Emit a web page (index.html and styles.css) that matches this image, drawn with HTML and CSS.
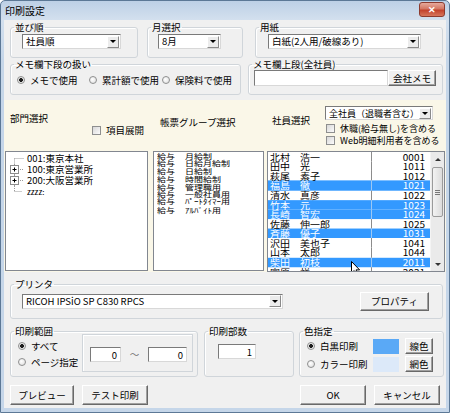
FILE: index.html
```html
<!DOCTYPE html>
<html>
<head>
    <title>印刷設定</title>
    <meta charset="utf-8">
    <link rel="stylesheet" href="styles.css">
</head>
<body>
<div class="window">
    <div class="titlebar">
        <span class="title">印刷設定</span>
        <span class="close">&#x2715;</span>
    </div>
    <div class="client">
        <div class="row row-top">
            <fieldset class="g-sort">
                <legend>並び順</legend>
                <div class="combo w-sort"><span>社員順</span><i class="drop"></i></div>
            </fieldset>
            <fieldset class="g-month">
                <legend>月選択</legend>
                <div class="combo w-month"><span>8月</span><i class="drop"></i></div>
            </fieldset>
            <fieldset class="g-paper">
                <legend>用紙</legend>
                <div class="combo w-paper"><span>白紙(2人用/破線あり)</span><i class="drop"></i></div>
            </fieldset>
        </div>

        <div class="row row-memo">
            <fieldset class="g-memo-lo">
                <legend>メモ欄下段の扱い</legend>
                <div class="radios">
                    <label class="radio w-r1"><i class="rb on"></i>メモで使用</label>
                    <label class="radio w-r2"><i class="rb"></i>累計額で使用</label>
                    <label class="radio"><i class="rb"></i>保険料で使用</label>
                </div>
            </fieldset>
            <fieldset class="g-memo-up">
                <legend>メモ欄上段(全社員)</legend>
                <div class="memo-line">
                    <div class="edit w-memo"></div>
                    <div class="btn w-kaisha">会社メモ</div>
                </div>
            </fieldset>
        </div>

        <div class="panels">
            <div class="panel p-dept">
                <div class="phead">
                    <div class="ptitle">部門選択</div>
                    <label class="chk expand"><i class="cb"></i>項目展開</label>
                </div>
                <div class="plist tree">
                    <div class="node">
                        <svg width="19" height="11"><path d="M8.5 5.5V11M8.5 5.5H18" stroke="#9a9a9a" stroke-dasharray="1 1"/></svg>
                        <span>001:東京本社</span>
                    </div>
                    <div class="node">
                        <svg width="19" height="11"><path d="M8.5 0V11M12 5.5H18" stroke="#9a9a9a" stroke-dasharray="1 1"/><rect x="4.5" y="1.5" width="8" height="8" fill="#fff" stroke="#8c8c8c"/><path d="M6.5 5.5H10.5M8.5 3.5V7.5" stroke="#000"/></svg>
                        <span>100:東京営業所</span>
                    </div>
                    <div class="node">
                        <svg width="19" height="11"><path d="M8.5 0V11M12 5.5H18" stroke="#9a9a9a" stroke-dasharray="1 1"/><rect x="4.5" y="1.5" width="8" height="8" fill="#fff" stroke="#8c8c8c"/><path d="M6.5 5.5H10.5M8.5 3.5V7.5" stroke="#000"/></svg>
                        <span>200:大阪営業所</span>
                    </div>
                    <div class="node">
                        <svg width="19" height="11"><path d="M8.5 0V5.5M8.5 5.5H16" stroke="#9a9a9a" stroke-dasharray="1 1"/></svg>
                        <span class="zz">zzzz:</span>
                    </div>
                </div>
            </div>

            <div class="panel p-group">
                <div class="phead">
                    <div class="ptitle">帳票グループ選択</div>
                </div>
                <div class="plist groups">
                    <div class="squash">
                        <div class="grp"><span>給与</span>月給制</div>
                        <div class="grp"><span>給与</span>日給月給制</div>
                        <div class="grp"><span>給与</span>日給制</div>
                        <div class="grp"><span>給与</span>時間給制</div>
                        <div class="grp"><span>給与</span>管理職用</div>
                        <div class="grp"><span>給与</span>一般社員用</div>
                        <div class="grp"><span>給与</span>ﾊﾟｰﾄﾀｲﾏｰ用</div>
                        <div class="grp"><span>給与</span>ｱﾙﾊﾞｲﾄ用</div>
                    </div>
                </div>
            </div>

            <div class="panel p-emp">
                <div class="phead">
                    <div class="ptitle">社員選択</div>
                    <div class="emp-opts">
                        <div class="combo w-emp"><span>全社員（退職者含む）</span><i class="drop"></i></div>
                        <label class="chk"><i class="cb"></i>休職(給与無し)を含める</label>
                        <label class="chk"><i class="cb"></i>Web明細利用者を含める</label>
                    </div>
                </div>
                <div class="plist emps">
                    <div class="rows">
                        <div class="emp"><span class="sei">北村</span><span class="mei">浩一</span><span class="no">0001</span></div>
                        <div class="emp"><span class="sei">田中</span><span class="mei">光</span><span class="no">1011</span></div>
                        <div class="emp"><span class="sei">萩尾</span><span class="mei">素子</span><span class="no">1012</span></div>
                        <div class="emp sel"><span class="sei">福島</span><span class="mei">徹</span><span class="no">1021</span></div>
                        <div class="emp"><span class="sei">清水</span><span class="mei">真彦</span><span class="no">1022</span></div>
                        <div class="emp sel"><span class="sei">竹本</span><span class="mei">元</span><span class="no">1023</span></div>
                        <div class="emp sel"><span class="sei">長崎</span><span class="mei">智宏</span><span class="no">1024</span></div>
                        <div class="emp"><span class="sei">佐藤</span><span class="mei">伸一郎</span><span class="no">1025</span></div>
                        <div class="emp sel"><span class="sei">斉藤</span><span class="mei">優子</span><span class="no">1031</span></div>
                        <div class="emp"><span class="sei">沢田</span><span class="mei">美也子</span><span class="no">1041</span></div>
                        <div class="emp"><span class="sei">山本</span><span class="mei">太郎</span><span class="no">1044</span></div>
                        <div class="emp sel"><span class="sei">柴田</span><span class="mei">初枝</span><span class="no">2011</span></div>
                        <div class="emp"><span class="sei">宮原</span><span class="mei">祥</span><span class="no">2021</span></div>
                    </div>
                    <div class="vscroll">
                        <div class="sb-btn"><i class="up"></i></div>
                        <div class="sb-track">
                            <div class="thumb"><i></i><i></i><i></i></div>
                        </div>
                        <div class="sb-btn"><i class="down"></i></div>
                    </div>
                    <svg class="cursor" width="10" height="15" viewBox="0 0 10 15"><path d="M0.5 0.5V12L3.2 9.6L5.2 14L7 13.2L5 8.9H8.6Z" fill="#fff" stroke="#000"/></svg>
                </div>
            </div>
        </div>

        <fieldset class="g-printer">
            <legend>プリンタ</legend>
            <div class="printer-line">
                <div class="combo w-printer"><span>RICOH IPSiO SP C830 RPCS</span><i class="drop"></i></div>
                <div class="btn w-prop">プロパティ</div>
            </div>
        </fieldset>

        <div class="row row-opts">
            <fieldset class="g-range">
                <legend>印刷範囲</legend>
                <div class="range-line">
                    <div class="rcol">
                        <label class="radio"><i class="rb on"></i>すべて</label>
                        <label class="radio"><i class="rb"></i>ページ指定</label>
                    </div>
                    <div class="range-box">
                        <div class="edit w-from">0</div>
                        <span class="tilde">～</span>
                        <div class="edit w-to">0</div>
                    </div>
                </div>
            </fieldset>
            <fieldset class="g-copies">
                <legend>印刷部数</legend>
                <div class="edit w-copies">1</div>
            </fieldset>
            <fieldset class="g-color">
                <legend>色指定</legend>
                <div class="crow">
                    <label class="radio w-cr"><i class="rb on"></i>白黒印刷</label>
                    <i class="swatch line-c"></i>
                    <div class="btn w-col">線色</div>
                </div>
                <div class="crow">
                    <label class="radio w-cr"><i class="rb"></i>カラー印刷</label>
                    <i class="swatch net-c"></i>
                    <div class="btn w-col">網色</div>
                </div>
            </fieldset>
        </div>

        <div class="footer">
            <div class="btn w-foot">プレビュー</div>
            <div class="btn w-foot2">テスト印刷</div>
            <div class="spacer"></div>
            <div class="btn w-foot2">OK</div>
            <div class="btn w-foot2 last">キャンセル</div>
        </div>
    </div>
</div>
</body>
</html>
```

FILE: styles.css
```css
* {
    box-sizing: border-box;
}

body {
    margin: 0;
    font-family: "Noto Sans CJK JP", "Liberation Sans", sans-serif;
    font-size: 9.5px;
    color: #000;
    background: #fff;
}

/* ---- window frame ---- */
.window {
    width: 450px;
    height: 413px;
    display: flex;
    flex-direction: column;
    padding: 0 3px 4px;
    border: 1px solid #5c7896;
    border-radius: 5px 5px 0 0;
    background: linear-gradient(#bdd0e6, #d3e0ee 19px, #c5d6e9 60px, #c5d6e9);
}

.titlebar {
    height: 19px;
    display: flex;
    justify-content: space-between;
    align-items: flex-start;
}

.title {
    padding-left: 1px;
    line-height: 20px;
    font-size: 10px;
}

.close {
    width: 26px;
    height: 15px;
    margin: 1px 1px 0 0;
    border: 1px solid #8d3b2f;
    border-radius: 3px;
    background: linear-gradient(#e6a99c, #d47763 45%, #c2422d 55%, #d7765c);
    color: #fff;
    font-size: 9px;
    font-weight: bold;
    line-height: 13px;
    text-align: center;
}

.client {
    flex: 1;
    background: #f0f0f0;
}

/* ---- common controls ---- */
.row {
    display: flex;
}

fieldset {
    margin: 0;
    padding: 1px 0 8px 3px;
    min-width: 0;
    border: 1px solid #d0d5da;
    border-radius: 3px;
    box-shadow: inset 1px 1px 0 #fff;
}

legend {
    padding: 0 1px;
    line-height: 12px;
}

.combo {
    display: flex;
    align-items: center;
    height: 15px;
    padding-left: 3px;
    background: #fff;
    border: 1px solid;
    border-color: #7a7a7a #d8d8d8 #d8d8d8 #7a7a7a;
}

.combo span {
    flex: 1;
    white-space: nowrap;
    overflow: hidden;
    line-height: 13px;
}

.drop {
    width: 12px;
    height: 12px;
    margin-right: 1px;
    display: flex;
    align-items: center;
    justify-content: center;
    background: #ececec;
    border: 1px solid;
    border-color: #fff #8a8a8a #8a8a8a #fff;
}

.drop::after {
    content: "";
    border-left: 3px solid transparent;
    border-right: 3px solid transparent;
    border-top: 3px solid #000;
}

.edit {
    height: 16px;
    padding-right: 3px;
    background: #fff;
    border: 1px solid;
    border-color: #7a7a7a #d8d8d8 #d8d8d8 #7a7a7a;
    text-align: right;
    line-height: 14px;
}

.btn {
    display: flex;
    align-items: center;
    justify-content: center;
    background: #f0f0f0;
    border: 1px solid;
    border-color: #fff #696969 #696969 #fff;
    box-shadow: inset -1px -1px 0 #a0a0a0;
    white-space: nowrap;
}

.radio, .chk {
    display: flex;
    align-items: center;
    white-space: nowrap;
}

.rb {
    width: 8px;
    height: 8px;
    margin-right: 5px;
    border: 1px solid #8e8f8f;
    border-radius: 50%;
    background: radial-gradient(circle at 40% 40%, #fff, #dadada);
}

.rb.on {
    background: radial-gradient(circle, #1e1e1e 0 1.6px, #e6e6e6 2.2px, #fff);
}

.cb {
    width: 9px;
    height: 9px;
    margin-right: 5px;
    border: 1px solid #8e8f8f;
    background: linear-gradient(135deg, #d8d8d8, #fbfbfb);
}

/* ---- top rows ---- */
.row-top {
    margin-top: 1px;
    padding-left: 6px;
}

.g-sort { width: 128px; }
.g-month { width: 96px; margin-left: 9px; }
.g-paper { width: 188px; margin-left: 12px; }

.w-sort { width: 99px; margin-left: 8px; }
.w-month { width: 63px; margin-left: 7px; }
.w-paper { width: 153px; margin-left: 9px; }

.row-memo {
    padding-left: 6px;
}

.g-memo-lo { width: 231px; }
.g-memo-up { width: 195px; margin-left: 7px; }

.radios {
    display: flex;
    margin: 3px 0 0 3px;
    line-height: 12px;
}

.w-r1 { width: 72px; }
.w-r2 { width: 73px; }

.memo-line {
    display: flex;
    margin: -1px 0 0 2px;
}

.w-memo { width: 134px; }
.w-kaisha { width: 48px; height: 16px; }

/* ---- selection panels ---- */
.panels {
    display: flex;
    height: 172px;
    margin-top: 5px;
}

.panel {
    display: flex;
    flex-direction: column;
    background: #faf7e8;
}

.p-dept { width: 146px; }
.p-group { width: 116px; }
.p-emp { width: 180px; }

.phead {
    height: 50px;
}

.plist {
    flex: 1;
    margin-top: 1px;
    background: #fff;
    border: 1px solid #828790;
    overflow: hidden;
}

.p-dept .phead {
    padding: 12px 0 0 6px;
}

.ptitle {
    line-height: 12px;
}

.expand {
    margin: 0 0 0 82px;
    line-height: 12px;
}

.p-dept .plist {
    margin: 1px 2px 1px 1px;
}

.tree {
    padding-top: 1px;
}

.node {
    display: flex;
    align-items: center;
    height: 11px;
    line-height: 11px;
}

.node svg {
    margin-right: 2px;
}

.zz {
    font-size: 8px;
}

.p-group .phead {
    padding: 16px 0 0 10px;
}

.p-group .plist {
    margin: 1px 2px 1px 3px;
}

/* the old list control draws its glyphs squeezed vertically */
.squash {
    padding-left: 3px;
    font-size: 9px;
    transform: scaleY(0.82);
    transform-origin: top left;
}

.grp {
    height: 9.4px;
    line-height: 9.4px;
    white-space: nowrap;
}

.grp span {
    display: inline-block;
    width: 28px;
}

.p-emp .phead {
    display: flex;
    padding: 6px 0 0 6px;
}

.p-emp .ptitle {
    width: 53px;
    margin-top: 8px;
}

.emp-opts .chk {
    height: 12px;
    margin-left: 1px;
    font-size: 9px;
}

.w-emp {
    width: 108px;
    height: 14px;
    margin-bottom: 2px;
    font-size: 9px;
}

.w-emp .drop {
    height: 11px;
}

.emps {
    display: flex;
    position: relative;
    margin: 1px 1px 0 1px;
}

.rows {
    flex: 1;
    font-size: 10px;
    transform: scaleY(0.86);
    transform-origin: top left;
}

.emp {
    display: flex;
    height: 11.15px;
    line-height: 11.15px;
    white-space: nowrap;
}

.emp.sel {
    background: #3399ff;
    color: #fff;
}

.sei {
    width: 32px;
    padding-left: 2px;
}

.mei {
    width: 71px;
}

.no {
    flex: 1;
    padding-right: 5px;
    text-align: right;
    border-left: 1px solid #8c8c8c;
}

.emp.sel .no {
    border-left-color: #9cc8f4;
}

.vscroll {
    width: 14px;
    display: flex;
    flex-direction: column;
    background: #eaeaea;
    border-left: 1px solid #f4f4f4;
}

.sb-btn {
    height: 14px;
    display: flex;
    align-items: center;
    justify-content: center;
}

.up {
    border-left: 3px solid transparent;
    border-right: 3px solid transparent;
    border-bottom: 3px solid #333;
}

.down {
    border-left: 3px solid transparent;
    border-right: 3px solid transparent;
    border-top: 3px solid #333;
}

.sb-track {
    flex: 1;
}

.thumb {
    height: 50px;
    margin: 1px 1px 0;
    display: flex;
    flex-direction: column;
    align-items: center;
    justify-content: center;
    gap: 1px;
    border: 1px solid #9b9b9b;
    border-radius: 2px;
    background: linear-gradient(90deg, #f3f3f3, #dcdcdc);
}

.thumb i {
    width: 5px;
    height: 1px;
    background: #777;
}

.cursor {
    position: absolute;
    left: 83px;
    top: 109px;
}

/* ---- printer ---- */
.g-printer {
    width: 433px;
    margin: 6px 0 0 6px;
    padding-bottom: 7px;
}

.printer-line {
    display: flex;
    align-items: center;
    height: 20px;
}

.w-printer { width: 261px; margin-left: 8px; }
.w-prop { width: 69px; height: 19px; margin-left: 77px; }

/* ---- print options ---- */
.row-opts {
    margin-top: 6px;
    padding-left: 6px;
}

.row-opts fieldset {
    padding-bottom: 3px;
}

.g-range { width: 188px; }
.g-copies { width: 90px; margin-left: 6px; }
.g-color { width: 145px; margin-left: 5px; }

.range-line {
    display: flex;
}

.rcol {
    width: 64px;
    margin-left: 4px;
}

.rcol .radio {
    height: 16px;
}

.range-box {
    width: 111px;
    height: 38px;
    margin-top: -4px;
    display: flex;
    align-items: center;
    padding: 2px 0 0 7px;
    border: 1px solid #d0d5da;
    box-shadow: inset 1px 1px 0 #fff;
}

.w-from { width: 31px; height: 15px; }
.w-to { width: 39px; height: 15px; }

.tilde {
    width: 27px;
    text-align: center;
    color: #707070;
}

.w-copies {
    width: 38px;
    height: 15px;
    margin: 6px 0 0 10px;
}

.crow {
    display: flex;
    align-items: center;
    height: 18px;
    margin-left: 4px;
}

.crow:first-of-type {
    margin-top: -1px;
}

.w-cr { width: 66px; }

.swatch {
    width: 26px;
    height: 15px;
}

.line-c { background: #5aa9f6; }
.net-c { background: #dce9f9; }

.w-col { width: 28px; height: 16px; margin-left: 6px; }

/* ---- footer ---- */
.footer {
    display: flex;
    margin-top: 8px;
    padding: 0 6px;
}

.footer .btn {
    height: 20px;
}

.w-foot { width: 64px; margin-right: 8px; }
.w-foot2 { width: 66px; }
.spacer { flex: 1; }
.last { margin-left: 8px; }
```
